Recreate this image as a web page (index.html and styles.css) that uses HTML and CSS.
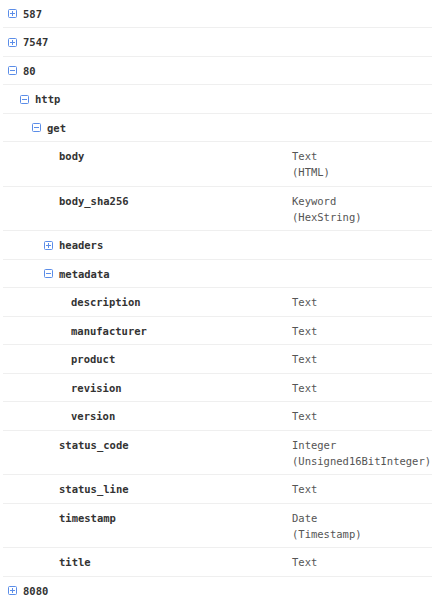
FILE: index.html
```html
<!DOCTYPE html>
<html>
<head>
<meta charset="utf-8">
<link rel="stylesheet" href="styles.css">
</head>
<body>
<div class="tree">
  <div class="row"><div class="name l0"><span class="ic plus"></span>587</div><div class="type"></div></div>
  <div class="row"><div class="name l0"><span class="ic plus"></span>7547</div><div class="type"></div></div>
  <div class="row"><div class="name l0"><span class="ic minus"></span>80</div><div class="type"></div></div>
  <div class="row"><div class="name l1"><span class="ic minus"></span>http</div><div class="type"></div></div>
  <div class="row"><div class="name l2"><span class="ic minus"></span>get</div><div class="type"></div></div>
  <div class="row"><div class="name l3">body</div><div class="type">Text<br>(HTML)</div></div>
  <div class="row"><div class="name l3">body_sha256</div><div class="type">Keyword<br>(HexString)</div></div>
  <div class="row"><div class="name l3"><span class="ic plus"></span>headers</div><div class="type"></div></div>
  <div class="row"><div class="name l3"><span class="ic minus"></span>metadata</div><div class="type"></div></div>
  <div class="row"><div class="name l4">description</div><div class="type">Text</div></div>
  <div class="row"><div class="name l4">manufacturer</div><div class="type">Text</div></div>
  <div class="row"><div class="name l4">product</div><div class="type">Text</div></div>
  <div class="row"><div class="name l4">revision</div><div class="type">Text</div></div>
  <div class="row"><div class="name l4">version</div><div class="type">Text</div></div>
  <div class="row"><div class="name l3">status_code</div><div class="type">Integer<br>(Unsigned16BitInteger)</div></div>
  <div class="row"><div class="name l3">status_line</div><div class="type">Text</div></div>
  <div class="row"><div class="name l3">timestamp</div><div class="type">Date<br>(Timestamp)</div></div>
  <div class="row"><div class="name l3">title</div><div class="type">Text</div></div>
  <div class="row"><div class="name l0"><span class="ic plus"></span>8080</div><div class="type"></div></div>
</div>
</body>
</html>
```
FILE: styles.css
```css
html, body {
  margin: 0;
  padding: 0;
  background: #ffffff;
}
body {
  font-family: "DejaVu Sans Mono", "Liberation Mono", monospace;
  font-size: 10.5px;
  line-height: 16px;
  overflow: hidden;
}
.tree {
  margin: -0.5px 0 0 3px;
}
.row {
  display: grid;
  grid-template-columns: 289px 1fr;
  padding: 6px 0 5.5px;
  border-bottom: 1px solid #efefef;
}
.name {
  display: flex;
  align-items: center;
  align-self: start;
  height: 16px;
  font-weight: bold;
  color: #333333;
  white-space: nowrap;
}
.type {
  color: #555555;
  white-space: nowrap;
}
.l0 { padding-left: 20px; }
.l1 { padding-left: 32px; }
.l2 { padding-left: 44px; }
.l3 { padding-left: 56px; }
.l4 { padding-left: 68px; }
.ic {
  position: relative;
  width: 9px;
  height: 9px;
  box-sizing: border-box;
  border: 1px solid #5b8de8;
  border-radius: 1.5px;
  margin-left: -15px;
  margin-right: 6px;
  flex: none;
}
.ic::before, .ic.plus::after {
  content: "";
  position: absolute;
  background: #5b8de8;
}
.ic::before {
  left: 1px;
  right: 1px;
  top: 3px;
  height: 1px;
}
.ic.plus::after {
  top: 1px;
  bottom: 1px;
  left: 3px;
  width: 1px;
}
```
